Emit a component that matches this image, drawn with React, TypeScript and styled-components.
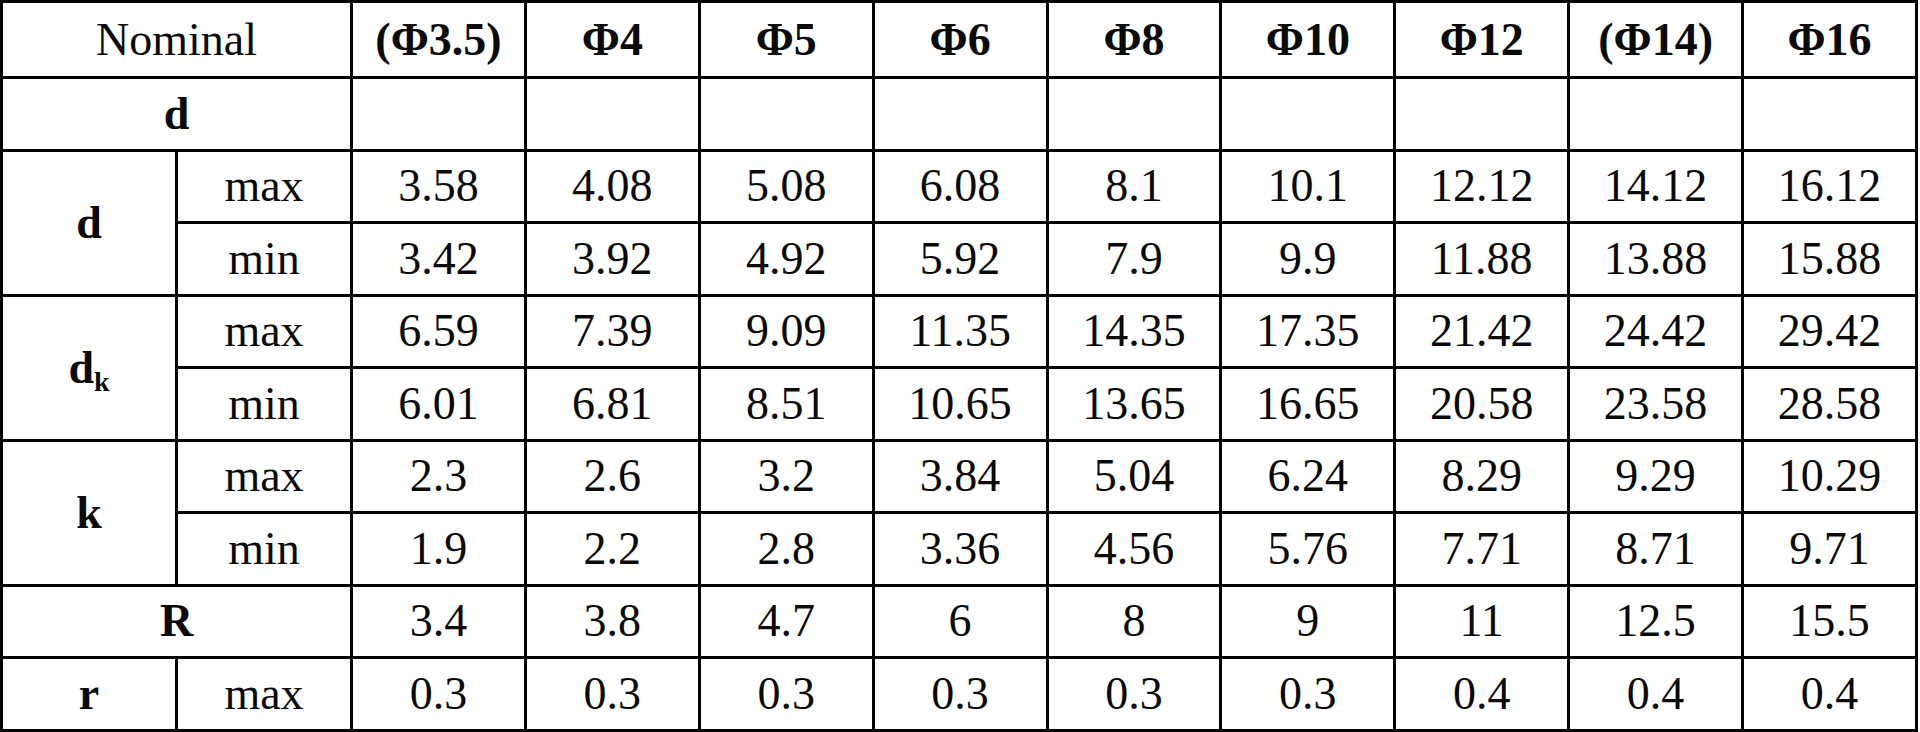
import React from 'react';
import styled, {createGlobalStyle} from 'styled-components';

const GlobalStyle = createGlobalStyle`
  html, body {
    margin: 0;
    padding: 0;
    background: #fff;
  }
`;

const Sheet = styled.table`
  width: 1918px;
  border-collapse: collapse;
  table-layout: fixed;
  font-family: "Liberation Serif", "DejaVu Serif", serif;
  font-size: 46px;
  color: #0a0a0a;
`;

const Row = styled.tr<{ $h: number }>`
  height: ${p => p.$h}px;
`;

const Cell = styled.td<{ $bold?: boolean }>`
  border: 3px solid #000;
  padding: 0;
  text-align: center;
  vertical-align: middle;
  font-weight: ${p => (p.$bold ? 700 : 400)};
  line-height: 1;
  white-space: nowrap;
`;

const Sub = styled.sub`
  font-size: 28px;
  vertical-align: -8px;
  line-height: 0;
`;

const sizes = ['(Φ3.5)', 'Φ4', 'Φ5', 'Φ6', 'Φ8', 'Φ10', 'Φ12', '(Φ14)', 'Φ16'];

type Group = {
  label: React.ReactNode;
  rows: { kind?: string; values: string[] }[];
};

const groups: Group[] = [
  {
    label: 'd',
    rows: [
      {kind: 'max', values: ['3.58', '4.08', '5.08', '6.08', '8.1', '10.1', '12.12', '14.12', '16.12']},
      {kind: 'min', values: ['3.42', '3.92', '4.92', '5.92', '7.9', '9.9', '11.88', '13.88', '15.88']},
    ],
  },
  {
    label: <>d<Sub>k</Sub></>,
    rows: [
      {kind: 'max', values: ['6.59', '7.39', '9.09', '11.35', '14.35', '17.35', '21.42', '24.42', '29.42']},
      {kind: 'min', values: ['6.01', '6.81', '8.51', '10.65', '13.65', '16.65', '20.58', '23.58', '28.58']},
    ],
  },
  {
    label: 'k',
    rows: [
      {kind: 'max', values: ['2.3', '2.6', '3.2', '3.84', '5.04', '6.24', '8.29', '9.29', '10.29']},
      {kind: 'min', values: ['1.9', '2.2', '2.8', '3.36', '4.56', '5.76', '7.71', '8.71', '9.71']},
    ],
  },
  {
    label: 'R',
    rows: [{values: ['3.4', '3.8', '4.7', '6', '8', '9', '11', '12.5', '15.5']}],
  },
  {
    label: 'r',
    rows: [{kind: 'max', values: ['0.3', '0.3', '0.3', '0.3', '0.3', '0.3', '0.4', '0.4', '0.4']}],
  },
];

function App() {
  return (
    <>
      <GlobalStyle/>
      <Sheet>
        <colgroup>
          <col style={{width: 175}}/>
          <col style={{width: 175}}/>
          {sizes.map(s => <col key={s}/>)}
        </colgroup>
        <tbody>
          <Row $h={76}>
            <Cell colSpan={2}>Nominal</Cell>
            {sizes.map(s => <Cell key={s} $bold>{s}</Cell>)}
          </Row>
          <Row $h={72.5}>
            <Cell colSpan={2} $bold>d</Cell>
            {sizes.map(s => <Cell key={s}/>)}
          </Row>
          {groups.map((g, gi) =>
            g.rows.map((r, ri) => (
              <Row key={gi + '-' + ri} $h={72.5}>
                {ri === 0 && (
                  <Cell $bold rowSpan={g.rows.length} colSpan={r.kind ? 1 : 2}>{g.label}</Cell>
                )}
                {r.kind && <Cell>{r.kind}</Cell>}
                {r.values.map((v, vi) => <Cell key={vi}>{v}</Cell>)}
              </Row>
            ))
          )}
        </tbody>
      </Sheet>
    </>
  );
}

export default App;
